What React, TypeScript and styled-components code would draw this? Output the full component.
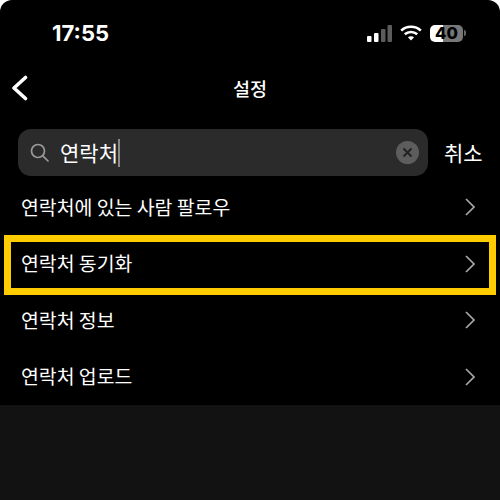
import React from "react";
import styled, { createGlobalStyle } from "styled-components";

const Global = createGlobalStyle`
  html, body { margin: 0; padding: 0; background: #fff; }
  #root { width: 500px; height: 500px; overflow: hidden; }
  *, *::after { box-sizing: border-box; }
`;
const Screen = styled.div`
  width: 500px; height: 500px; background: #000; color: #fff;
  border-radius: 12px 12px 0 0; position: relative; overflow: hidden;
  display: flex; flex-direction: column;
  font-family: "Noto Sans CJK KR", "Noto Sans", sans-serif;
`;
const StatusBar = styled.div`
  height: 66px; flex: none; padding: 0 34px 0 52px; display: flex; align-items: center; justify-content: space-between;
`;
const Time = styled.div`
  font-family: Inter, "Liberation Sans", sans-serif; font-weight: 700; font-size: 22px; letter-spacing: 0;
`;
const StatusIcons = styled.div`
  display: flex; align-items: center; gap: 8px;
`;
const Battery = styled.div`
  width: 33px; height: 17px; border-radius: 5px;
  background: linear-gradient(90deg, #fff 0 40%, #777 40% 100%);
  color: #000; font-family: Inter, sans-serif; font-weight: 800; font-size: 16.5px; line-height: 17px; text-align: center;
`;
const BatteryWrap = styled.div`
  display: flex; align-items: center; gap: 1px;
`;
const Nub = styled.div`
  width: 2px; height: 6px; background: #666; border-radius: 0 2px 2px 0;
`;
const Nav = styled.div`
  height: 44px; flex: none; display: flex; align-items: center; justify-content: center; position: relative;
`;
const Back = styled.svg`
  position: absolute; left: 10px; top: 9px;
`;
const Title = styled.div`
  font-size: 18.5px; font-weight: 500; line-height: 1;
`;
const SearchRow = styled.div`
  margin-top: 19px; height: 47px; flex: none; padding: 0 18px; display: flex; align-items: center; gap: 16px;
`;
const SearchBox = styled.div`
  flex: 1; height: 47px; border-radius: 13px; background: #2b2b2b; display: flex; align-items: center; padding: 0 9px 0 12px; gap: 11px;
`;
const Query = styled.div`
  flex: 1; font-size: 21px; font-weight: 400; display: flex; align-items: center; line-height: 1;
`;
const Caret = styled.span`
  width: 2px; height: 28px; background: #8a8a8a;
`;
const Clear = styled.div`
  width: 23px; height: 23px; border-radius: 50%; background: #5d5d5d; display: flex; align-items: center; justify-content: center;
`;
const Cancel = styled.div`
  font-size: 21px; width: 38px; white-space: nowrap; line-height: 1;
`;
const List = styled.div`
  display: flex; flex-direction: column; flex: none; margin-top: 3px;
`;
const Row = styled.div<{ $highlight?: boolean }>`
  height: 56.5px; display: flex; align-items: center; justify-content: space-between; padding: 0 25px 0 21px;
  font-size: 19.4px; line-height: 1; position: relative;
  ${(p) => p.$highlight && `
    &::after { content: ""; position: absolute; left: 4px; right: 4px; top: -1px; height: 60px; border: 7px solid #ffcc00; }
  `}
`;
const RowLabel = styled.span`
  margin-top: -2px;
`;
const Footer = styled.div`
  flex: 1; background: #121212;
`;

const Chevron = () => (
  <svg width="10" height="18" viewBox="0 0 10 18" fill="none" stroke="#a8a8a8" strokeWidth="1.7">
    <path d="M1 1l8 8-8 8" />
  </svg>
);

const items = ["연락처에 있는 사람 팔로우", "연락처 동기화", "연락처 정보", "연락처 업로드"];

export default function App() {
  return (
    <Screen>
      <Global />
      <StatusBar>
        <Time>17:55</Time>
        <StatusIcons>
          <svg width="25" height="17" viewBox="0 0 25 17">
            <rect x="0" y="11" width="4.500" height="6" rx="1" fill="#fff" />
            <rect x="7" y="8" width="4.500" height="9" rx="1" fill="#fff" />
            <rect x="14" y="4" width="4.500" height="13" rx="1" fill="#5c5c5c" />
            <rect x="20.500" y="0" width="4.500" height="17" rx="1" fill="#5c5c5c" />
          </svg>
          <svg width="22" height="16" viewBox="0 0 22 16" fill="none" stroke="#fff" strokeWidth="2.600">
            <path d="M1.200 5.600C6.600 .5 15.400 .5 20.800 5.600" />
            <path d="M4.800 9.200c3.400-3 9-3 12.400 0" />
            <path d="M11 15.600l-3.100-3.300c1.800-1.400 4.400-1.400 6.200 0z" fill="#fff" stroke="none" />
          </svg>
          <BatteryWrap>
            <Battery>40</Battery>
            <Nub />
          </BatteryWrap>
        </StatusIcons>
      </StatusBar>
      <Nav>
        <Back width="20" height="26" viewBox="0 0 20 26" fill="none" stroke="#fff" strokeWidth="3.600" strokeLinecap="round" strokeLinejoin="round">
          <path d="M15.500 2.500L4 13l11.500 10.500" />
        </Back>
        <Title>설정</Title>
      </Nav>
      <SearchRow>
        <SearchBox>
          <svg width="19" height="19" viewBox="0 0 19 19" fill="none" stroke="#9a9a9a" strokeWidth="1.700" strokeLinecap="round">
            <circle cx="8" cy="8" r="6.500" />
            <path d="M12.800 12.800L18 18" />
          </svg>
          <Query>연락처<Caret /></Query>
          <Clear>
            <svg width="11" height="11" viewBox="0 0 11 11" stroke="#222" strokeWidth="2">
              <path d="M1.500 1.500l8 8M9.500 1.500l-8 8" />
            </svg>
          </Clear>
        </SearchBox>
        <Cancel>취소</Cancel>
      </SearchRow>
      <List>
        {items.map((t, i) => (
          <Row key={t} $highlight={i === 1}>
            <RowLabel>{t}</RowLabel>
            <Chevron />
          </Row>
        ))}
      </List>
      <Footer />
    </Screen>
  );
}
